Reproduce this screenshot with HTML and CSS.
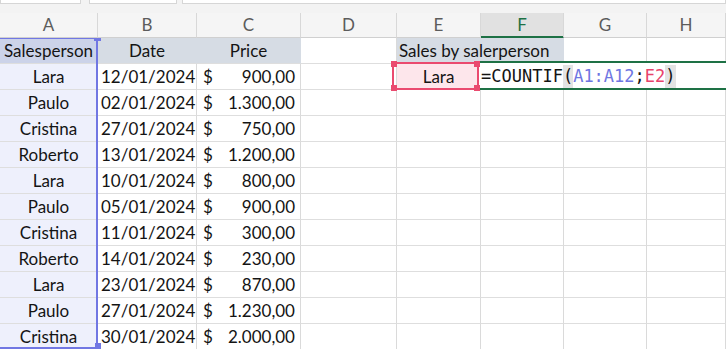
FILE: index.html
```html
<!DOCTYPE html>
<html>
<head>
<meta charset="utf-8">
<link rel="stylesheet" href="styles.css">
</head>
<body>
  <div class="chrome">
    <span class="chrome__box chrome__box_name"></span>
    <span class="chrome__box chrome__box_fx"></span>
    <span class="chrome__box chrome__box_bar"></span>
  </div>

  <div class="sheet">
    <div class="row row_head">
      <div class="col">A</div>
      <div class="col">B</div>
      <div class="col">C</div>
      <div class="col">D</div>
      <div class="col">E</div>
      <div class="col col_active">F</div>
      <div class="col">G</div>
      <div class="col">H</div>
    </div>

    <div class="row">
      <div class="cell cell_name cell_title">Salesperson</div>
      <div class="cell cell_fill cell_center">Date</div>
      <div class="cell cell_fill cell_center">Price</div>
      <div class="cell"></div>
      <div class="cell cell_fill cell_wide">Sales by salerperson</div>
      <div class="cell"></div>
      <div class="cell"></div>
    </div>
    <div class="row">
      <div class="cell cell_name">Lara</div>
      <div class="cell cell_date">12/01/2024</div>
      <div class="cell cell_price"><span>$</span><span>900,00</span></div>
      <div class="cell"></div>
      <div class="cell cell_center cell_picked">Lara</div>
      <div class="cell"></div>
      <div class="cell"></div>
      <div class="cell"></div>
    </div>
    <div class="row">
      <div class="cell cell_name">Paulo</div>
      <div class="cell cell_date">02/01/2024</div>
      <div class="cell cell_price"><span>$</span><span>1.300,00</span></div>
      <div class="cell"></div><div class="cell"></div><div class="cell"></div><div class="cell"></div><div class="cell"></div>
    </div>
    <div class="row">
      <div class="cell cell_name">Cristina</div>
      <div class="cell cell_date">27/01/2024</div>
      <div class="cell cell_price"><span>$</span><span>750,00</span></div>
      <div class="cell"></div><div class="cell"></div><div class="cell"></div><div class="cell"></div><div class="cell"></div>
    </div>
    <div class="row">
      <div class="cell cell_name">Roberto</div>
      <div class="cell cell_date">13/01/2024</div>
      <div class="cell cell_price"><span>$</span><span>1.200,00</span></div>
      <div class="cell"></div><div class="cell"></div><div class="cell"></div><div class="cell"></div><div class="cell"></div>
    </div>
    <div class="row">
      <div class="cell cell_name">Lara</div>
      <div class="cell cell_date">10/01/2024</div>
      <div class="cell cell_price"><span>$</span><span>800,00</span></div>
      <div class="cell"></div><div class="cell"></div><div class="cell"></div><div class="cell"></div><div class="cell"></div>
    </div>
    <div class="row">
      <div class="cell cell_name">Paulo</div>
      <div class="cell cell_date">05/01/2024</div>
      <div class="cell cell_price"><span>$</span><span>900,00</span></div>
      <div class="cell"></div><div class="cell"></div><div class="cell"></div><div class="cell"></div><div class="cell"></div>
    </div>
    <div class="row">
      <div class="cell cell_name">Cristina</div>
      <div class="cell cell_date">11/01/2024</div>
      <div class="cell cell_price"><span>$</span><span>300,00</span></div>
      <div class="cell"></div><div class="cell"></div><div class="cell"></div><div class="cell"></div><div class="cell"></div>
    </div>
    <div class="row">
      <div class="cell cell_name">Roberto</div>
      <div class="cell cell_date">14/01/2024</div>
      <div class="cell cell_price"><span>$</span><span>230,00</span></div>
      <div class="cell"></div><div class="cell"></div><div class="cell"></div><div class="cell"></div><div class="cell"></div>
    </div>
    <div class="row">
      <div class="cell cell_name">Lara</div>
      <div class="cell cell_date">23/01/2024</div>
      <div class="cell cell_price"><span>$</span><span>870,00</span></div>
      <div class="cell"></div><div class="cell"></div><div class="cell"></div><div class="cell"></div><div class="cell"></div>
    </div>
    <div class="row">
      <div class="cell cell_name">Paulo</div>
      <div class="cell cell_date">27/01/2024</div>
      <div class="cell cell_price"><span>$</span><span>1.230,00</span></div>
      <div class="cell"></div><div class="cell"></div><div class="cell"></div><div class="cell"></div><div class="cell"></div>
    </div>
    <div class="row">
      <div class="cell cell_name">Cristina</div>
      <div class="cell cell_date">30/01/2024</div>
      <div class="cell cell_price"><span>$</span><span>2.000,00</span></div>
      <div class="cell"></div><div class="cell"></div><div class="cell"></div><div class="cell"></div><div class="cell"></div>
    </div>

    <!-- range referenced by the formula -->
    <div class="range"></div>
    <span class="range__handle range__handle_top"></span>
    <span class="range__handle range__handle_bottom"></span>

    <!-- criteria cell E2 -->
    <div class="pick">
      <span class="pick__handle pick__handle_tl"></span>
      <span class="pick__handle pick__handle_tr"></span>
      <span class="pick__handle pick__handle_bl"></span>
      <span class="pick__handle pick__handle_br"></span>
    </div>

    <!-- cell being edited, F2 -->
    <div class="editor">=COUNTIF<span class="editor__paren">(</span><span class="editor__ref_a">A1:A12</span>;<span class="editor__ref_e">E2</span><span class="editor__paren">)</span></div>
  </div>
</body>
</html>
```

FILE: styles.css
```css
html, body {
    margin: 0;
    overflow: hidden;
    background: #fff;
}

.chrome {
    display: flex;
    height: 13px;
    background: #f3f3f3;
}
.chrome__box {
    display: block;
    height: 3px;
    background: #fff;
    border: 1px solid #d6d6d6;
    border-top: none;
}
.chrome__box_name {
    width: 79px;
    margin-right: 8px;
}
.chrome__box_fx {
    width: 86px;
    margin-right: 5px;
}
.chrome__box_bar {
    flex: 1;
}

.sheet {
    position: relative;
    font-family: Lato, "Open Sans", sans-serif;
    font-size: 17px;
    color: #141414;
}

.row {
    display: grid;
    grid-template-columns: 98px 99px 104px 96px 84px 83px 83px 1fr;
    height: 26px;
}

.row_head {
    height: 25px;
    background: #f5f5f5;
    position: relative;
    z-index: 2;
}

.col {
    box-sizing: border-box;
    border-right: 1px solid #d8d8d8;
    border-bottom: 1px solid #d0d0d0;
    line-height: 24px;
    text-align: center;
    color: #5c5c5c;
}
.col_active {
    background: #e1e1e1;
    color: #1e7145;
    border-bottom: 1px solid #1e7145;
    box-shadow: inset 0 -1px 0 #1e7145;
}

.cell {
    box-sizing: border-box;
    border-right: 1px solid #dadada;
    border-bottom: 1px solid #dedede;
    line-height: 25px;
    padding: 0 3px;
    white-space: nowrap;
}

.cell_center {
    text-align: center;
}
.cell_fill {
    background: #d6dce4;
    border-right-color: #d6dce4;
}
.cell_wide {
    grid-column: span 2;
    padding-left: 2px;
}
.cell_name {
    background: #eef0fc;
    text-align: center;
}
.cell_title {
    background: #ccd3e9;
    padding: 0;
}
.cell_date {
    text-align: right;
    padding-right: 2px;
}
.cell_price {
    display: flex;
    justify-content: space-between;
    padding: 0 5px 0 6px;
}
.cell_picked {
    background: #fde6eb;
}

.range {
    position: absolute;
    left: -2px;
    top: 25px;
    width: 100px;
    height: 311px;
    box-sizing: border-box;
    border: 2px solid #7177e3;
    border-top-width: 1px;
    z-index: 1;
}
.range__handle {
    position: absolute;
    background: #7177e3;
    z-index: 1;
}
.range__handle_top {
    left: 94px;
    top: 25px;
    width: 7px;
    height: 3px;
}
.range__handle_bottom {
    left: 95px;
    top: 330px;
    width: 6px;
    height: 6px;
}

.pick {
    position: absolute;
    left: 392px;
    top: 49px;
    width: 87px;
    height: 28px;
    box-sizing: border-box;
    border: 2px solid #ea4a6f;
    z-index: 3;
}
.pick__handle {
    position: absolute;
    width: 6px;
    height: 6px;
    background: #ea4a6f;
}
.pick__handle_tl { left: -3px; top: -3px; }
.pick__handle_tr { right: -3px; top: -3px; }
.pick__handle_bl { left: -3px; bottom: -3px; }
.pick__handle_br { right: -3px; bottom: -3px; }

.editor {
    position: absolute;
    left: 477px;
    top: 48px;
    width: 260px;
    height: 29px;
    box-sizing: border-box;
    border: 2px solid #1e7145;
    background: #fff;
    padding: 1px 0 0 2px;
    font-family: "DejaVu Sans Mono", monospace;
    font-size: 17px;
    line-height: 24px;
    color: #141414;
    white-space: nowrap;
    z-index: 2;
}
.editor__paren {
    display: inline-block;
    line-height: 23px;
    background: #e3e3e3;
}
.editor__ref_a {
    color: #6f76e2;
}
.editor__ref_e {
    color: #e8436b;
}
```
